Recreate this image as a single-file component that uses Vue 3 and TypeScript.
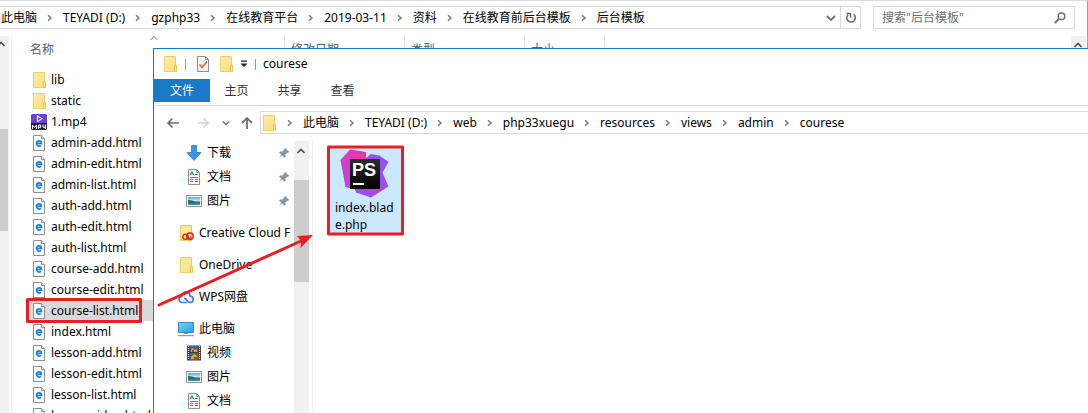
<script setup lang="ts">
interface NavItem {
  label: string
  icon: string
  sub?: boolean
  pinned?: boolean
  gap?: boolean
}

const outerCrumbs: string[] = ['此电脑', 'TEYADI (D:)', 'gzphp33', '在线教育平台', '2019-03-11', '资料', '在线教育前后台模板', '后台模板']
const innerCrumbs: string[] = ['此电脑', 'TEYADI (D:)', 'web', 'php33xuegu', 'resources', 'views', 'admin', 'courese']

const files: { name: string; icon: string }[] = [
  { name: 'lib', icon: 'folder' },
  { name: 'static', icon: 'folder' },
  { name: '1.mp4', icon: 'mp4' },
  ...[
    'admin-add.html', 'admin-edit.html', 'admin-list.html', 'auth-add.html', 'auth-edit.html',
    'auth-list.html', 'course-add.html', 'course-edit.html', 'course-list.html', 'index.html',
    'lesson-add.html', 'lesson-edit.html', 'lesson-list.html', 'lesson-video.html',
  ].map((name) => ({ name, icon: 'html' })),
]
const selected = 'course-list.html'

const nav: NavItem[] = [
  { label: '下载', icon: 'download', sub: true, pinned: true },
  { label: '文档', icon: 'doc', sub: true, pinned: true },
  { label: '图片', icon: 'picture', sub: true, pinned: true },
  { label: 'Creative Cloud Files', icon: 'cc', gap: true },
  { label: 'OneDrive', icon: 'folder', gap: true },
  { label: 'WPS网盘', icon: 'cloud', gap: true },
  { label: '此电脑', icon: 'pc', gap: true },
  { label: '视频', icon: 'video', sub: true },
  { label: '图片', icon: 'picture', sub: true },
  { label: '文档', icon: 'doc', sub: true },
]
</script>

<template>
  <main class="desktop">
    <svg class="defs" aria-hidden="true">
      <defs>
        <linearGradient id="gFolder" x1="0" y1="0" x2="1" y2="1">
          <stop offset="0" stop-color="#ffeba6" /><stop offset="1" stop-color="#ffdf80" />
        </linearGradient>
        <linearGradient id="gScreen" x1="0" y1="0" x2="1" y2="1">
          <stop offset="0" stop-color="#7fd3f7" /><stop offset="1" stop-color="#1ba1e8" />
        </linearGradient>
        <linearGradient id="gSky" x1="0" y1="0" x2="0" y2="1">
          <stop offset="0" stop-color="#5aa5df" /><stop offset="0.5" stop-color="#d7edfa" />
          <stop offset="0.6" stop-color="#3d7d6c" /><stop offset="1" stop-color="#3585c4" />
        </linearGradient>
        <linearGradient id="gPs" x1="0" y1="0" x2="1" y2="1">
          <stop offset="0" stop-color="#b845e6" /><stop offset="0.5" stop-color="#8f52f5" /><stop offset="1" stop-color="#b344ec" />
        </linearGradient>
        <linearGradient id="gPink" x1="0" y1="1" x2="1" y2="0">
          <stop offset="0" stop-color="#b04be8" /><stop offset="0.5" stop-color="#d63cc4" /><stop offset="1" stop-color="#ff318c" />
        </linearGradient>
        <linearGradient id="gBlack" x1="0" y1="0" x2="0" y2="1">
          <stop offset="0" stop-color="#2c2c2c" /><stop offset="1" stop-color="#000" />
        </linearGradient>
      </defs>
      <symbol id="folder" viewBox="0 0 16 16">
        <path d="M2.5.5h11v15h-11z" fill="url(#gFolder)" stroke="#efcf6c" />
        <path d="M12.5 9.5h2v6h-2z" fill="#ffe592" stroke="#e9c452" />
      </symbol>
      <symbol id="mp4" viewBox="0 0 16 16">
        <path d="M1 0h14l1 1v8H0V1z" fill="#6546d2" />
        <path d="M0 9h16v6l-1 1H1l-1-1z" fill="#242128" />
        <path d="M6.5 2v5.6L11 4.8z" fill="none" stroke="#fff" stroke-width="1.1" />
        <path d="M1.500 15v-4l2 2.500 2-2.500v4M7.500 15v-4h2.200v2.300H7.500M12 10.500v2.700h3M14.300 10.500V15" fill="none" stroke="#fff" />
      </symbol>
      <symbol id="html" viewBox="0 0 16 16">
        <path d="M2.500.5h8l3 3v12h-11z" fill="#fbfcfd" stroke="#8d8f91" />
        <path d="M10.500.5v3h3" fill="#e8e8e8" stroke="#8d8f91" />
        <path d="M5.500 8.300h5c0-3.200-5-3.400-5 0 0 3 3 3.200 4.700 2.100" fill="none" stroke="#1c83d8" stroke-width="1.700" />
      </symbol>
      <symbol id="check" viewBox="0 0 16 16">
        <path d="M2.500.5h8l3 3v12h-11z" fill="#f8f8f8" stroke="#8d8d8d" />
        <path d="M10.500.5v3h3" fill="none" stroke="#8d8d8d" />
        <path d="M4.500 8.500l2.600 3 5-6" fill="none" stroke="#e8622c" stroke-width="1.700" />
      </symbol>
      <symbol id="download" viewBox="0 0 16 16">
        <path d="M5.500.5h5v7h4.500L8 15.500 1 7.500h4.500z" fill="#3a96e6" stroke="#277bc5" stroke-width=".8" />
      </symbol>
      <symbol id="doc" viewBox="0 0 16 16">
        <path d="M2.500.5h8l3 3v12h-11z" fill="#fff" stroke="#8d9297" />
        <path d="M10.500.5v3h3" fill="none" stroke="#8d9297" />
        <path d="M4 6.500l2-4 2 4M4.500 5h3M9 5.500h3M4 8.500h8M4 10.500h3M9 10.500h3M4 12.500h3M9 12.500h3" fill="none" stroke="#3286b8" />
      </symbol>
      <symbol id="picture" viewBox="0 0 16 16">
        <path d="M.5 2.500h15v11H.5z" fill="#fff" stroke="#8b9298" />
        <path d="M2 4h12v8H2z" fill="url(#gSky)" />
        <path d="M2 7q5 0 7 2l5 .2V10H2z" fill="#2c6a60" />
      </symbol>
      <symbol id="cc" viewBox="0 0 16 16">
        <path d="M2.500.5h11v15h-11z" fill="url(#gFolder)" stroke="#edc85a" />
        <circle cx="7.500" cy="11.700" r="2.600" fill="none" stroke="#dc2a1e" stroke-width="1.400" />
        <circle cx="12" cy="11.200" r="3.200" fill="none" stroke="#dc2a1e" stroke-width="1.500" />
        <path d="M8 10.500l3 2.500q2 .5 2-1.500" fill="none" stroke="#dc2a1e" stroke-width="1.200" />
      </symbol>
      <symbol id="cloud" viewBox="0 0 16 16">
        <path d="M9 13.500H4.500C0 13.500 0 7.500 4 7.500 4 1.500 12 1.500 12 7c4.500.5 4 6.500 0 6.500-3 0-3-4.500-6-4" fill="none" stroke="#3e7cf4" stroke-width="1.700" />
      </symbol>
      <symbol id="pc" viewBox="0 0 16 16">
        <path d="M.5 1.500h15v10H.5z" fill="url(#gScreen)" stroke="#3d8bb9" />
        <path d="M6 12h4v1H6z" fill="#7b8d98" /><path d="M0 14h16v1.200H0z" fill="#8b9ba5" />
      </symbol>
      <symbol id="video" viewBox="0 0 16 16">
        <path d="M1 0.500h14v15H1z" fill="#3c3c3c" />
        <path d="M4 1h8v6H4zM4 8h8v7H4z" fill="#3c69ad" />
        <path d="M5 5l2-2 2 2 2-1v3H5zM5 12l3-3 3 2v3H5z" fill="#e3a52f" />
        <path d="M6 5h2v2H6zM8 12h3v2H8z" fill="#b23a31" />
        <path d="M2.500 1v14M13.500 1v14" stroke="#fff" stroke-width="1.300" stroke-dasharray="1 1" />
      </symbol>
      <symbol id="pin" viewBox="0 0 12 12">
        <path d="M7.200 1l4 4-1.200.8-.8-.1-1.800 1.900.1 2.200-1 1L3.800 8.200 1 11l2.200-3.500L1 5.300l1.100-.9 2.300.1 1.800-1.900-.1-.8z" fill="#8795a3" />
      </symbol>
      <symbol id="chevR" viewBox="0 0 8 8"><path d="M2 1.200l3 2.800-3 2.800" fill="none" stroke="#7a7a7a" stroke-width="1.500" /></symbol>
      <symbol id="chevD" viewBox="0 0 10 10"><path d="M1 3l4 4 4-4" fill="none" stroke="#727272" stroke-width="1.800" /></symbol>
      <symbol id="chevU" viewBox="0 0 10 10"><path d="M1.500 7L5 3.500 8.500 7" fill="none" stroke="#4d4d4d" stroke-width="1.600" /></symbol>
    </svg>

    <section class="back" aria-label="后台模板">
      <header class="back-bar">
        <nav class="address outer">
          <template v-for="(c, i) in outerCrumbs" :key="c">
            <svg v-if="i" class="sep"><use href="#chevR" /></svg>
            <button type="button" class="crumb">{{ c }}</button>
          </template>
          <span class="fill"></span>
          <button type="button" class="drop" aria-label="历史记录"><svg><use href="#chevD" /></svg></button>
          <button type="button" class="refresh" aria-label="刷新">
            <svg viewBox="0 0 12 12"><path d="M8.500 2.200A4.300 4.300 0 1 1 3 2.700M1.500 1.500h4v4" fill="none" stroke="#6e6e6e" stroke-width="1.600" /></svg>
          </button>
        </nav>
        <label class="search">
          <input type="search" placeholder="搜索&quot;后台模板&quot;" aria-label="搜索后台模板" />
          <svg viewBox="0 0 12 12"><circle cx="7.500" cy="4.300" r="3.300" fill="none" stroke="#707070" stroke-width="1.500" /><path d="M5 6.800L.8 11" stroke="#707070" stroke-width="2" /></svg>
        </label>
      </header>
      <div class="back-body">
        <div class="left-scroll"><svg><use href="#chevU" /></svg><i></i></div>
        <table class="files">
          <colgroup><col class="c-name" /><col class="c-mid" /><col class="c-mid" /><col class="c-size" /><col /></colgroup>
          <thead>
            <tr>
              <th class="first">名称<svg class="sort" viewBox="0 0 10 10"><path d="M1.500 7L5 3.500 8.500 7" fill="none" stroke="#777" /></svg></th>
              <th>修改日期</th><th>类型</th><th>大小</th><th></th>
            </tr>
          </thead>
          <tbody>
            <tr v-for="f in files" :key="f.name">
              <td colspan="5">
                <div class="file" :class="{ on: f.name === selected }"><svg><use :href="'#' + f.icon" /></svg><span>{{ f.name }}</span></div>
              </td>
            </tr>
          </tbody>
        </table>
        <div class="right-scroll"><svg><use href="#chevU" /></svg></div>
      </div>
    </section>

    <section class="front" aria-label="courese">
      <header class="title">
        <svg class="ico"><use href="#folder" /></svg><i class="bar"></i>
        <svg class="ico"><use href="#check" /></svg>
        <svg class="ico"><use href="#folder" /></svg>
        <svg class="menu" viewBox="0 0 8 8"><path d="M1 .5h6v1.200H1zM.5 3.500h7L4 7z" fill="#222" /></svg><i class="bar"></i>
        <h1>courese</h1>
      </header>
      <div class="tabs">
        <button type="button" class="active">文件</button>
        <button type="button">主页</button>
        <button type="button">共享</button>
        <button type="button">查看</button>
      </div>
      <div class="path-row">
        <button type="button" class="arrow" aria-label="后退"><svg viewBox="0 0 14 14"><path d="M13 7H2M6.500 2.500L2 7l4.500 4.500" fill="none" stroke="#707070" stroke-width="1.700" /></svg></button>
        <button type="button" class="arrow" aria-label="前进"><svg viewBox="0 0 14 14"><path d="M1 7h11M7.500 2.500L12 7l-4.500 4.500" fill="none" stroke="#d6d6d6" stroke-width="1.700" /></svg></button>
        <button type="button" class="recent" aria-label="最近浏览"><svg><use href="#chevD" /></svg></button>
        <button type="button" class="arrow up" aria-label="上移"><svg viewBox="0 0 14 14"><path d="M7 13V2M2 7l5-5 5 5" fill="none" stroke="#707070" stroke-width="1.800" /></svg></button>
        <nav class="address inner">
          <svg class="ico"><use href="#folder" /></svg>
          <template v-for="c in innerCrumbs" :key="c">
            <svg class="sep"><use href="#chevR" /></svg>
            <button type="button" class="crumb">{{ c }}</button>
          </template>
        </nav>
      </div>
      <div class="front-body">
        <ul class="nav">
          <li v-for="(n, i) in nav" :key="i" :class="{ sub: n.sub, gap: n.gap }">
            <svg class="ico"><use :href="'#' + n.icon" /></svg><a href="#">{{ n.label }}</a>
            <svg v-if="n.pinned" class="pin"><use href="#pin" /></svg>
          </li>
        </ul>
        <div class="nav-scroll"><svg><use href="#chevU" /></svg><i></i></div>
        <div class="content">
          <button type="button" class="tile">
            <svg viewBox="0 0 50 50">
              <path d="M5 38L9 14l17-5 5-4 8.500 1.500 9 6.500-6 10.500 6 14L31 48.500l-15-5-1.500-4z" fill="url(#gPs)" />
              <path d="M.5 11L10 .5l16 2.500v7H12v28.500l-6.500-.5z" fill="url(#gPink)" />
              <path d="M10 10h30v30H10z" fill="url(#gBlack)" />
              <path d="M13 34h11v2H13z" fill="#fff" />
              <text x="12" y="27" class="ps">PS</text>
            </svg>
            <span>index.blade.php</span>
          </button>
        </div>
      </div>
    </section>

    <svg class="marks" aria-hidden="true">
      <g fill="none" stroke="#ed1c24" stroke-width="3" stroke-linejoin="round" stroke-linecap="round">
        <rect x="27.500" y="299.500" width="113" height="22" />
        <rect x="328.500" y="147" width="74" height="87" />
        <path d="M159 305L301 241" />
      </g>
      <path d="M313 235L297 236l4 5-.5 7z" fill="#ed1c24" />
    </svg>
  </main>
</template>

<style>
html, body { margin: 0; background: #fff; overflow: hidden; }
</style>

<style scoped>
.desktop {
  position: relative;
  height: 100vh;
  overflow: hidden;
  background: #fff;
  color: #000;
  font: 12px/18px "Noto Sans", "Noto Sans CJK SC", sans-serif;
}
.defs { position: absolute; width: 0; height: 0; }
svg { display: block; flex: none; }
button { margin: 0; padding: 0; border: 0; background: none; color: inherit; font: inherit; white-space: nowrap; }
.ico { width: 16px; height: 16px; }

.back { height: 100%; display: flex; flex-direction: column; box-sizing: border-box; border-top: 1px solid #dcdcdc; border-right: 1px solid #a0a0a0; }
.back-bar { display: flex; gap: 12px; padding: 5px 12px 7px 0; }
.address { display: flex; align-items: center; flex: 1; min-width: 0; box-sizing: border-box; height: 23px; border: 1px solid #d9d9d9; }
.outer { padding-left: 1px; border-left: 0; }
.sep { width: 8px; height: 8px; margin: 0 9px; }
.fill { flex: 1; }
.drop { padding: 0 4px; }
.drop svg { width: 10px; height: 10px; }
.refresh { align-self: stretch; width: 20px; padding: 0 4px; border-left: 1px solid #d9d9d9; }
.refresh svg { width: 12px; height: 12px; }
.search { display: flex; align-items: center; box-sizing: border-box; width: 202px; height: 23px; padding: 0 8px; border: 1px solid #d9d9d9; }
.search input { flex: 1; min-width: 0; padding: 0; border: 0; outline: 0; background: none; color: #6d6d6d; font: inherit; }
.search input::placeholder { color: #6d6d6d; opacity: 1; }
.search svg { width: 12px; height: 12px; }

.back-body { display: flex; flex: 1; min-height: 0; overflow: hidden; }
.left-scroll { width: 9px; margin-right: 2px; background: #f0f0f0; flex: none; overflow: hidden; }
.left-scroll svg { width: 10px; height: 10px; margin: 3px 0 80px -4px; }
.left-scroll i { display: block; width: 8px; height: 102px; background: #cdcdcd; }
.right-scroll { width: 15px; margin-right: 1px; background: #f0f0f0; flex: none; }
.right-scroll svg { width: 10px; height: 10px; margin: 4px 2px; }
.files { flex: 1; min-width: 0; align-self: flex-start; table-layout: fixed; border-collapse: collapse; border-left: 1px solid #f0f0f0; }
.c-name { width: 273px; }
.c-mid { width: 120px; }
.c-size { width: 80px; }
th { position: relative; height: 24px; padding: 2px 0 0 6px; border-right: 1px solid #e2e2e2; color: #4c607a; font-weight: 400; text-align: left; }
th:last-child { border-right: 0; }
th.first { padding-left: 18px; }
.sort { position: absolute; top: -3px; left: 137px; width: 10px; height: 10px; }
td { padding: 0; }
tbody tr:first-child td { padding-top: 7px; }
.file { display: flex; align-items: center; gap: 4px; height: 21px; margin-left: 17px; padding-left: 2px; }
.file svg { width: 16px; height: 16px; }
.file.on { background: #d9d9d9; }

.front { position: absolute; inset: 48px 0 0 153px; display: flex; flex-direction: column; background: #fff; border: solid #1979ca; border-width: 1px 0 0 1px; }
.title { display: flex; align-items: center; height: 30px; padding-left: 8px; }
.title .ico + .ico { margin-left: 7px; }
.bar { width: 1px; height: 11px; margin: 0 9px 0 7px; background: #999; }
.menu { width: 8px; height: 8px; margin-left: 6px; }
.title .menu + .bar { margin: 0 7px; }
h1 { margin: 0; font: inherit; }
.tabs { display: flex; height: 26px; border-bottom: 1px solid #dadada; color: #333; }
.tabs button { width: 53px; height: 23px; }
.tabs .active { width: 56px; background: #1979ca; color: #fff; }
.path-row { display: flex; align-items: center; padding: 5px 0 7px 12px; }
.arrow svg { width: 14px; height: 14px; }
.arrow + .arrow { margin-left: 16px; }
.recent { margin: 0 10px 0 12px; }
.recent svg { width: 8px; height: 8px; }
.inner { margin-left: 6px; border-right: 0; }

.front-body { display: flex; flex: 1; min-height: 0; }
.nav { width: 140px; margin: 0; padding: 0; list-style: none; overflow: hidden; flex: none; }
.nav li { display: flex; align-items: center; gap: 5px; height: 24px; padding-left: 24px; white-space: nowrap; }
.nav li.sub { padding-left: 32px; }
.nav li.gap { margin-top: 8px; }
.nav a { margin-right: 3px; overflow: hidden; color: inherit; text-decoration: none; }
.pin { width: 12px; height: 12px; margin: 0 3px 0 auto; }
.nav li.sub .pin { margin-right: 4px; }
.nav-scroll { width: 15px; background: #f0f0f0; flex: none; margin-right: 3px; }
.nav-scroll svg { width: 10px; height: 10px; margin: 5px 2px 24px; }
.nav-scroll i { display: block; height: 102px; background: #cdcdcd; }
.content { flex: 1; padding: 7px 17px; border-left: 1px solid #f0f0f0; }
.tile { display: block; width: 72px; height: 85px; padding: 0 5px; background: #cce8ff; text-align: left; line-height: 17px; white-space: normal; word-break: break-all; }
.tile svg { width: 50px; height: 50px; margin: 0 5px; }
.tile span { display: block; }
.ps { fill: #fff; font-family: "Liberation Sans", sans-serif; font-size: 18px; font-weight: 700; }

.marks { position: absolute; inset: 0; width: 100%; height: 100%; pointer-events: none; }
</style>
